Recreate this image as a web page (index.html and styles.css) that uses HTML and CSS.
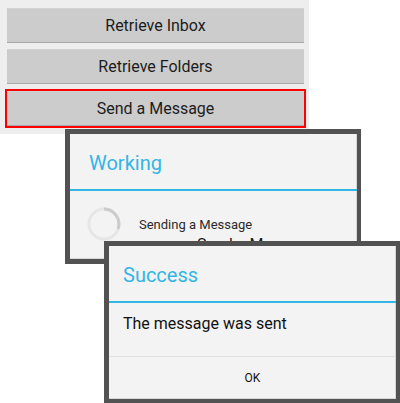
FILE: index.html
```html
<!DOCTYPE html>
<html>
<head>
<meta charset="utf-8">
<link rel="stylesheet" href="styles.css">
</head>
<body>
<div class="screen">
  <div class="panel">
    <div class="btn">Retrieve Inbox</div>
    <div class="btn b2">Retrieve Folders</div>
    <div class="focus"><div class="btn">Send a Message</div></div>
  </div>

  <div class="window working">
    <div class="dlg">
      <div class="title">Working</div>
      <div class="rule"></div>
      <div class="progress">
        <svg class="spinner" width="34" height="34" viewBox="0 0 34 34">
          <circle cx="17" cy="17" r="15" fill="none" stroke="#e6e6e6" stroke-width="3"/>
          <path d="M17 2 A15 15 0 0 1 31 22" fill="none" stroke="#cbcbcb" stroke-width="3"/>
        </svg>
        <span class="ptext">Sending a Message</span>
      </div>
      <div class="ghost">Send a Message</div>
    </div>
  </div>

  <div class="window success">
    <div class="dlg">
      <div class="title">Success</div>
      <div class="rule"></div>
      <div class="msg">The message was sent</div>
      <div class="actions"><span>OK</span></div>
    </div>
  </div>
</div>
</body>
</html>
```

FILE: styles.css
```css
html, body {
  margin: 0;
  padding: 0;
  background: #ffffff;
}
.screen {
  position: relative;
  width: 400px;
  height: 403px;
  overflow: hidden;
  font-family: Roboto, "Liberation Sans", sans-serif;
}
.panel {
  width: 309px;
  height: 134px;
  box-sizing: border-box;
  background: #eeeeee;
  padding: 8px 5px 0 7px;
  display: flex;
  flex-direction: column;
}
.btn {
  width: 297px;
  height: 35px;
  box-sizing: border-box;
  background: #cccccc;
  border-top: 1px solid #d2d2d2;
  border-bottom: 1px solid #a8a8a8;
  display: flex;
  align-items: center;
  justify-content: center;
  font-size: 16px;
  color: #1c1c1c;
}
.b2 {
  margin-top: 6px;
}
.focus {
  margin: 5px 0 0 -2px;
  width: 297px;
  border: 2px solid #ff0000;
}
.window {
  position: absolute;
  box-sizing: border-box;
  background: #525252;
  padding: 5px 4px 5px 5px;
}
.working {
  left: 65px;
  top: 129px;
  width: 296px;
  height: 135px;
}
.success {
  left: 104px;
  top: 241px;
  width: 296px;
  height: 162px;
  padding-bottom: 4px;
}
.dlg {
  height: 100%;
  background: #f3f3f3;
  box-shadow: inset -1px -1px 0 #d6d6d6;
  display: flex;
  flex-direction: column;
  overflow: hidden;
}
.title {
  height: 55px;
  flex: none;
  display: flex;
  align-items: center;
  padding-left: 19px;
  padding-top: 2px;
  box-sizing: border-box;
  font-size: 20px;
  color: #33b5e5;
}
.success .title {
  padding-left: 14px;
}
.rule {
  height: 2px;
  flex: none;
  background: #33b5e5;
}
.progress {
  display: flex;
  align-items: center;
  height: 66px;
  flex: none;
  padding-left: 17px;
  box-sizing: border-box;
}
.spinner {
  flex: none;
}
.ptext {
  margin-left: 18px;
  font-size: 13px;
  color: #2a2a2a;
}
.ghost {
  flex: none;
  font-size: 16px;
  line-height: 19px;
  color: #1c1c1c;
  padding-left: 127px;
  margin-top: -22px;
}
.msg {
  height: 54px;
  padding: 11px 0 0 14px;
  box-sizing: border-box;
  font-size: 16px;
  color: #111111;
  border-bottom: 1px solid #e2e2e2;
}
.actions {
  flex: 1;
  display: flex;
  align-items: center;
  justify-content: center;
  font-size: 12px;
  color: #111111;
}
```
